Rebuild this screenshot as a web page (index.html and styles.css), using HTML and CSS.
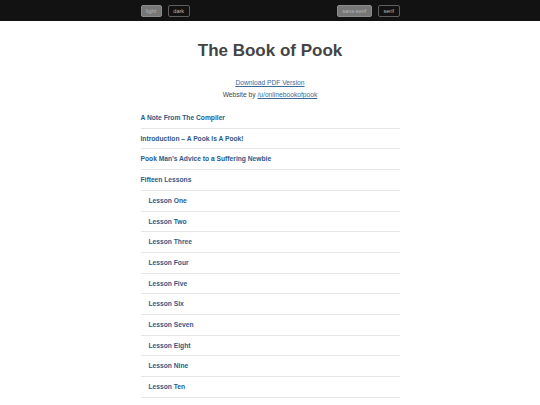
FILE: index.html
```html
<!DOCTYPE html>
<html>
<head>
<meta charset="utf-8">
<link rel="stylesheet" href="styles.css">
</head>
<body>
<div class="topbar">
  <div class="bar-inner">
    <div class="group">
      <span class="btn active">light</span>
      <span class="btn">dark</span>
    </div>
    <div class="group">
      <span class="btn active">sans-serif</span>
      <span class="btn">serif</span>
    </div>
  </div>
</div>
<main class="page">
  <h1 class="title">The Book of Pook</h1>
  <p class="meta"><a href="#">Download PDF Version</a></p>
  <p class="meta">Website by <a href="#">/u/onlinebookofpook</a></p>
  <ul class="toc">
    <li><a href="#">A Note From The Compiler</a></li>
    <li><a href="#">Introduction – A Pook Is A Pook!</a></li>
    <li><a href="#">Pook Man’s Advice to a Suffering Newbie</a></li>
    <li><a href="#">Fifteen Lessons</a></li>
    <li class="sub"><a href="#">Lesson One</a></li>
    <li class="sub"><a href="#">Lesson Two</a></li>
    <li class="sub"><a href="#">Lesson Three</a></li>
    <li class="sub"><a href="#">Lesson Four</a></li>
    <li class="sub"><a href="#">Lesson Five</a></li>
    <li class="sub"><a href="#">Lesson Six</a></li>
    <li class="sub"><a href="#">Lesson Seven</a></li>
    <li class="sub"><a href="#">Lesson Eight</a></li>
    <li class="sub"><a href="#">Lesson Nine</a></li>
    <li class="sub"><a href="#">Lesson Ten</a></li>
    <li class="sub"><a href="#">Lesson Eleven</a></li>
  </ul>
</main>
</body>
</html>
```

FILE: styles.css
```css
html, body {
  margin: 0;
  padding: 0;
  background: #ffffff;
  font-family: "Liberation Sans", Arial, sans-serif;
  color: #444444;
}

.topbar {
  background: #121212;
  height: 21px;
}

.bar-inner {
  width: 259px;
  margin: 0 auto;
  height: 21px;
  display: flex;
  justify-content: space-between;
  align-items: center;
}

.group {
  display: flex;
  gap: 6px;
}

.btn {
  display: inline-flex;
  align-items: center;
  height: 12px;
  box-sizing: border-box;
  padding: 0 4.5px;
  font-size: 5.6px;
  color: #b8b8b8;
  border: 1px solid #5e5e5e;
  border-radius: 2px;
  background: transparent;
}

.btn.active {
  background: #777777;
  border-color: #8c8c8c;
  color: #b4b4b4;
}

.page {
  width: 259px;
  margin: 0 auto;
}

.title {
  margin: 20px 0 0;
  font-size: 17px;
  line-height: 20px;
  font-weight: bold;
  text-align: center;
  color: #444444;
}

.meta {
  margin: 0;
  font-size: 6.7px;
  line-height: 12px;
  text-align: center;
  color: #444444;
}

.title + .meta {
  margin-top: 16px;
}

.meta a {
  color: #3b6a99;
  text-decoration: underline;
}

.toc {
  list-style: none;
  margin: 7px 0 0;
  padding: 0;
}

.toc li {
  padding: 5px 0 5px;
  line-height: 9.7px;
  border-bottom: 1px solid #e6e6e6;
  font-size: 6.7px;
  font-weight: bold;
}

.toc li.sub {
  padding-left: 8px;
}

.toc a {
  color: #2c5a88;
  text-decoration: none;
}
```
